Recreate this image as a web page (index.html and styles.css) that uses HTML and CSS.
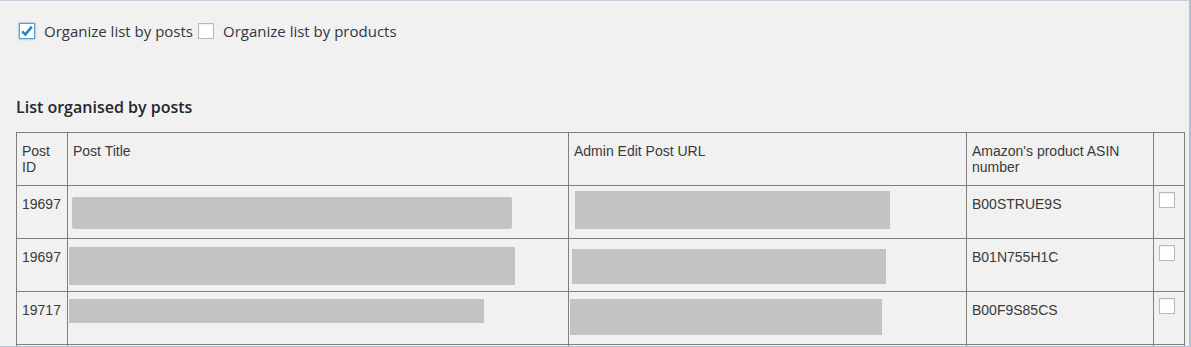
FILE: index.html
```html
<!DOCTYPE html>
<html>
  <head lang="en">
    <meta charset="UTF-8" />
    <title>Amazon product list</title>
    <link rel="stylesheet" href="styles.css">
  </head>

  <body>
    <div class="frame">
      <div class="page">
        <div class="options">
          <label class="opt">
            <span class="box checked">
              <svg width="14" height="14" viewBox="0 0 14 14"><path d="M2.2 7.4 L5.4 10.6 L11.8 2.6" fill="none" stroke="#1e8cbe" stroke-width="2.6" stroke-linejoin="miter"/></svg>
            </span>
            <span class="opt-text">Organize list by posts</span>
          </label>
          <label class="opt">
            <span class="box"></span>
            <span class="opt-text">Organize list by products</span>
          </label>
        </div>

        <h3 class="section-title">List organised by posts</h3>

        <table class="posts">
          <colgroup>
            <col class="c-id">
            <col class="c-title">
            <col class="c-url">
            <col class="c-asin">
            <col class="c-check">
          </colgroup>
          <thead>
            <tr>
              <th>Post ID</th>
              <th>Post Title</th>
              <th>Admin Edit Post URL</th>
              <th>Amazon's product ASIN number</th>
              <th></th>
            </tr>
          </thead>
          <tbody>
            <tr>
              <td>19697</td>
              <td><div class="redact r1-title"></div></td>
              <td><div class="redact r1-url"></div></td>
              <td>B00STRUE9S</td>
              <td class="pick"><span class="box"></span></td>
            </tr>
            <tr>
              <td>19697</td>
              <td><div class="redact r2-title"></div></td>
              <td><div class="redact r2-url"></div></td>
              <td>B01N755H1C</td>
              <td class="pick"><span class="box"></span></td>
            </tr>
            <tr>
              <td>19717</td>
              <td><div class="redact r3-title"></div></td>
              <td><div class="redact r3-url"></div></td>
              <td>B00F9S85CS</td>
              <td class="pick"><span class="box"></span></td>
            </tr>
            <tr>
              <td></td>
              <td></td>
              <td></td>
              <td></td>
              <td></td>
            </tr>
          </tbody>
        </table>
      </div>
    </div>
  </body>
</html>
```

FILE: styles.css
```css
html,
body {
  margin: 0;
  padding: 0;
  background: #f1f1f1;
}

.frame {
  width: 1189px;
  height: 345px;
  overflow: hidden;
  border-top: 1px solid #c6d0de;
  border-right: 2px solid #b3bfd1;
  border-bottom: 1px solid #b8c4d6;
  background: #f1f1f1;
}

.page {
  padding: 0 16px;
}

/* organise switch */
.options {
  display: flex;
  align-items: center;
  padding-top: 20px;
  padding-left: 3px;
  font-family: "Open Sans", "Noto Sans", sans-serif;
  font-size: 15px;
  line-height: 20px;
  color: #32373c;
}

.opt {
  display: flex;
  align-items: center;
  margin-right: 5px;
}

.opt-text {
  margin-left: 9px;
}

.box {
  display: inline-block;
  box-sizing: border-box;
  width: 16px;
  height: 16px;
  background: #fff;
  border: 1px solid #b4b9be;
  box-shadow: inset 0 1px 2px rgba(0, 0, 0, 0.07);
  position: relative;
}

.box.checked {
  border-color: #5b9dd9;
  box-shadow: 0 0 2px rgba(30, 140, 190, 0.8);
}

.box svg {
  position: absolute;
  left: 0;
  top: 0;
}

.section-title {
  margin: 55px 0 0;
  font-family: "Open Sans", "Noto Sans", sans-serif;
  font-size: 16px;
  font-weight: 600;
  line-height: 22px;
  color: #23282d;
}

/* table */
.posts {
  margin-top: 14px;
  border-collapse: collapse;
  table-layout: fixed;
  width: 1169px;
  font-family: "Liberation Sans", Arial, sans-serif;
  font-size: 14px;
  line-height: 16px;
  color: #3a3a3a;
}

.c-id { width: 51px; }
.c-title { width: 501px; }
.c-url { width: 398px; }
.c-asin { width: 187px; }
.c-check { width: 31px; }

.posts th,
.posts td {
  border: 1px solid #7f7f7f;
  padding: 10px 5px 0;
  height: 42px;
  vertical-align: top;
  text-align: left;
  font-weight: normal;
}

.posts td.pick {
  padding: 6px 5px 0;
}

.redact {
  background: #c3c3c3;
}

.r1-title { width: 440px; height: 32px; margin: 1px 0 0 -1px; border-radius: 2px; }
.r1-url { width: 315px; height: 38px; margin: -5px 0 0 1px; }
.r2-title { width: 446px; height: 38px; margin: -2px 0 0 -4px; }
.r2-url { width: 314px; height: 35px; margin: 0 0 0 -2px; }
.r3-title { width: 415px; height: 24px; margin: -3px 0 0 -4px; }
.r3-url { width: 312px; height: 36px; margin: -3px 0 0 -4px; }
```
